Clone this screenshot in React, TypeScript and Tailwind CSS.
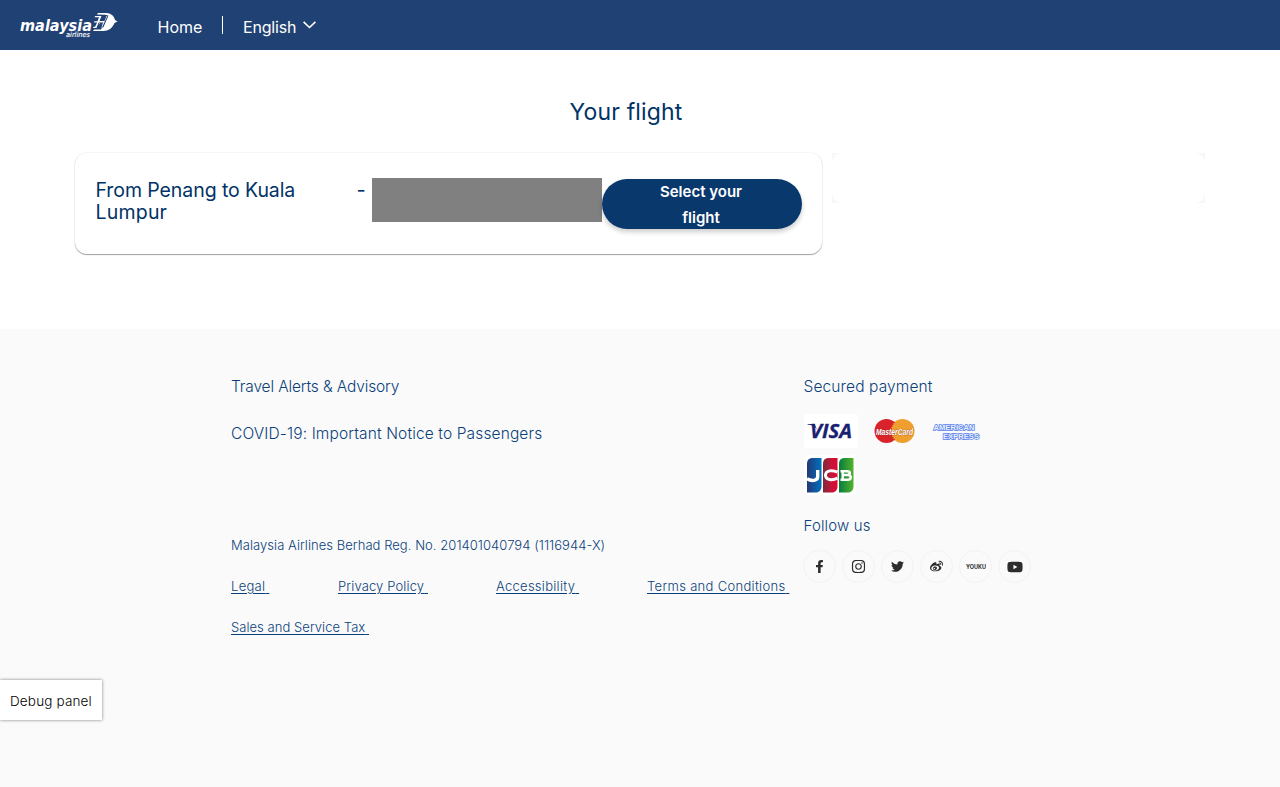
import type { ReactNode } from 'react';
import { FaFacebookF, FaInstagram, FaTwitter, FaWeibo, FaYoutube } from 'react-icons/fa';

function Logo() {
  return (
    <svg width="98" height="28" viewBox="0 0 98 28" fill="#fff" aria-label="Malaysia Airlines">
      <text x="0" y="18.500" fontSize="15.500" fontWeight="700" fontStyle="italic" fontFamily="'DejaVu Sans', sans-serif" textLength="72" lengthAdjust="spacingAndGlyphs">malaysia</text>
      <text x="46" y="25" fontSize="7" fontStyle="italic" fontFamily="'DejaVu Sans', sans-serif" stroke="#fff" strokeWidth=".15" textLength="24" lengthAdjust="spacingAndGlyphs">airlines</text>
      <path d="M78 1h8c5 0 8 3 9 7l2.500 1.500L94.500 11c-2 5-6 8-11 8H73l1-1.400h7l2.600-5h-5l.6-1.400h5L86 7l1.800-3.500-2.300-.8-8.500-.3z" />
      <path d="M75 4h6.500l-2 5h5l2-5h2l-5 11.500h-2.200l2.200-5h-5L76.500 16H73l.6-1.200h1.500l2-4.400H74l.5-1.200h3L79 5.300h-4.400z" />
      <path d="M82.600 4.500 80.700 9h2.800L85.400 4.500zM80 11l-2.300 5h2.800l2.300-5zM87.500 3.500h1L83.300 15.500H82z" fill="#1f4173" />
    </svg>
  );
}

function Visa() {
  return (
    <svg width="54" height="34" viewBox="0 0 54 34">
      <rect width="54" height="34" rx="3" fill="#fff" />
      <text x="6" y="24" fontSize="19.500" fontWeight="700" fontStyle="italic" fontFamily="'Open Sans', sans-serif" fill="#1a1f71" stroke="#1a1f71" strokeWidth=".3" textLength="42" lengthAdjust="spacingAndGlyphs">VISA</text>
      <path d="M3.500 10h7l2.500 5.500C11 12.500 8 11 3.500 10.500z" fill="#1a1f71" />
    </svg>
  );
}

function MasterCard() {
  return (
    <svg width="42" height="26" viewBox="0 0 42 26">
      <circle cx="12.500" cy="13" r="12" fill="#d9222a" />
      <circle cx="28.500" cy="13" r="12" fill="#ee9f2d" />
      <path d="M20.500 4c-5 5-5 13 0 18" fill="none" stroke="#d9222a" strokeWidth="1.500" strokeDasharray="1.500 .8" />
      <text x="2" y="16.500" fontSize="8.500" fontWeight="700" fontStyle="italic" fontFamily="'Liberation Sans', sans-serif" fill="#fff" stroke="#8d3434" strokeWidth=".5" paintOrder="stroke" textLength="37" lengthAdjust="spacingAndGlyphs">MasterCard</text>
    </svg>
  );
}

function Amex() {
  return (
    <svg width="50" height="20" viewBox="0 0 50 20" fontFamily="'Liberation Sans', sans-serif" fontWeight="700" fontSize="8" fill="#e8efff" stroke="#5b82ec" strokeWidth="1.600" paintOrder="stroke">
      <text x="1.500" y="8.200" textLength="41" lengthAdjust="spacingAndGlyphs">AMERICAN</text>
      <text x="11" y="16.500" textLength="36" lengthAdjust="spacingAndGlyphs">EXPRESS</text>
    </svg>
  );
}

function Jcb() {
  return (
    <svg width="54" height="40" viewBox="0 0 54 40">
      <defs>
        <linearGradient id="jb"><stop stopColor="#243878" /><stop offset="1" stopColor="#0072bd" /></linearGradient>
        <linearGradient id="jr"><stop stopColor="#772b3b" /><stop offset=".55" stopColor="#c41538" /><stop offset="1" stopColor="#e20736" /></linearGradient>
        <linearGradient id="jg"><stop stopColor="#087b3d" /><stop offset="1" stopColor="#52b42d" /></linearGradient>
      </defs>
      <rect width="52" height="40" rx="5" fill="#fff" />
      <path d="M3 9c0-4 2-6 6-6h8.500v28c0 4-2 6.500-6 6.500H3z" fill="url(#jb)" />
      <path d="M19 9c0-4 2-6 6-6h8.500v28c0 4-2 6.500-6 6.500H19z" fill="url(#jr)" />
      <path d="M35 9c0-4 2-6 6-6h8.500v28c0 4-2 6.500-6 6.500H35z" fill="url(#jg)" />
      <g fill="none" stroke="#fff" strokeWidth="3.400">
        <path d="M13.700 15V21.500c0 4.500-6 5-10.700 2.300" />
        <path d="M33.500 17.200c-5-2.500-12-2-12 3s7 5.500 12 3" strokeWidth="3" />
        <path d="M36.500 16.200h6.500c3.800 0 3.800 3.700 0 3.900h-5 5.500c4.300 0 4.300 4.700 0 4.700h-7M38.700 15.500v10" strokeWidth="2.500" />
      </g>
    </svg>
  );
}

function Social({ children }: { children: ReactNode }) {
  return <a className="flex size-[33px] items-center justify-center rounded-full border border-[#f2f2f2] text-[#2d2d2d]">{children}</a>;
}

function FooterLink({ children }: { children: ReactNode }) {
  return <a className="whitespace-pre underline underline-offset-2">{children}{' '}</a>;
}

export default function App() {
  return (
    <div className="relative flex h-[787px] w-full flex-col overflow-hidden bg-white font-['Inter',sans-serif] text-[#003366]">
      <header className="flex h-[50px] shrink-0 items-center bg-[#1f4173] pl-5 text-white">
        <div className="mt-0.5"><Logo /></div>
        <a className="mt-[3px] ml-[39.500px] w-[64.500px] text-base leading-5">Home</a>
        <span className="h-[18px] w-px bg-white" />
        <a className="mt-[3px] ml-5 w-[60px] text-base leading-5 tracking-[-0.2px]">English</a>
        <svg width="13" height="8" viewBox="0 0 13 8" fill="none" stroke="#fff" strokeWidth="1.600"><path d="m.6.8 5.900 5.700L12.400.8" /></svg>
      </header>

      <main className="flex h-[279px] shrink-0 flex-col px-[75px] pt-[46px]">
        <h1 className="h-[57px] w-[1102px] text-center text-[23px] leading-8 tracking-[0.15px]">Your flight</h1>
        <div className="flex items-start gap-[10px]">
          <section className="flex h-[101px] w-[747px] rounded-[12px] bg-white pt-[25px] pl-[20.500px] shadow-[0_1px_1px_rgba(0,0,0,0.35),0_0_2px_rgba(0,0,0,0.12)]">
            <h2 className="mt-[1px] w-[261px] pr-10 text-[19.500px] leading-[22px] tracking-[-0.08px]">From Penang to Kuala <span className="tracking-[0.2px]">Lumpur</span></h2>
            <span className="mt-[1px] w-[15.500px] text-xl leading-[22px]">-</span>
            <div className="h-[44px] w-[230px] bg-[#808080]" />
            <button className="mt-px h-[50px] w-[200px] rounded-full bg-[#09386d] pr-[50px] pl-[48px] text-[15px] leading-[26px] font-semibold text-white shadow-[0_3px_5px_rgba(0,0,0,0.2)]">Select your flight</button>
          </section>
          <aside className="h-[50px] w-[373px] bg-[#f7f7f7]"><div className="h-full rounded-[10px] bg-white" /></aside>
        </div>
      </main>

      <footer className="flex grow bg-[#fafafa] pt-[46px] pl-[231px] font-light text-[#0a3f7a]">
        <div className="w-[572px]">
          <p className="h-[47px] text-[15.500px] leading-6 tracking-[-0.13px]">Travel Alerts &amp; Advisory</p>
          <p className="h-[113px] text-[15.500px] leading-6 tracking-[0.13px]">COVID-19: Important Notice to Passengers</p>
          <div className="text-[13px] leading-5">
            <p className="h-[41px] tracking-[0.05px]">Malaysia Airlines Berhad Reg. No. 201401040794 (1116944-X)</p>
            <div className="flex h-[41px]">
              <div className="w-[107px] tracking-[0.3px]"><FooterLink>Legal</FooterLink></div>
              <div className="w-[158px] tracking-[0.14px]"><FooterLink>Privacy Policy</FooterLink></div>
              <div className="w-[151px] tracking-[0.28px]"><FooterLink>Accessibility</FooterLink></div>
              <div className="tracking-[0.31px]"><FooterLink>Terms and Conditions</FooterLink></div>
            </div>
            <div className="tracking-[0.05px]"><FooterLink>Sales and Service Tax</FooterLink></div>
          </div>
        </div>
        <div className="w-[240px]">
          <p className="h-[39px] pl-[0.500px] text-[15.500px] leading-6 tracking-[0.13px]">Secured payment</p>
          <div className="flex h-[41px] items-start pl-px">
            <Visa />
            <div className="mt-1 ml-4"><MasterCard /></div>
            <div className="mt-2 ml-4"><Amex /></div>
          </div>
          <div className="flex h-[59px] pl-px"><Jcb /></div>
          <p className="h-[36px] pl-[0.500px] text-[15px] leading-6 tracking-[0.15px]">Follow us</p>
          <div className="flex gap-[6px]">
            <Social><FaFacebookF size={13} /></Social>
            <Social><FaInstagram size={15} /></Social>
            <Social><FaTwitter size={13} /></Social>
            <Social><FaWeibo size={13} /></Social>
            <Social>
              <svg width="22" height="10" viewBox="0 0 22 10" fill="currentColor"><text x="1" y="7" fontSize="6" fontWeight="700" fontFamily="'Inter', sans-serif" textLength="20" lengthAdjust="spacingAndGlyphs">YOUKU</text></svg>
            </Social>
            <Social><FaYoutube size={16} /></Social>
          </div>
        </div>
      </footer>

      <div className="absolute top-[680px] left-0 flex h-[40px] w-[102px] items-center bg-white pt-[3px] pl-[10px] text-[13.500px] font-light tracking-[0.16px] whitespace-nowrap text-black shadow-[0_0_3px_rgba(0,0,0,0.5)]">Debug panel</div>
    </div>
  );
}
